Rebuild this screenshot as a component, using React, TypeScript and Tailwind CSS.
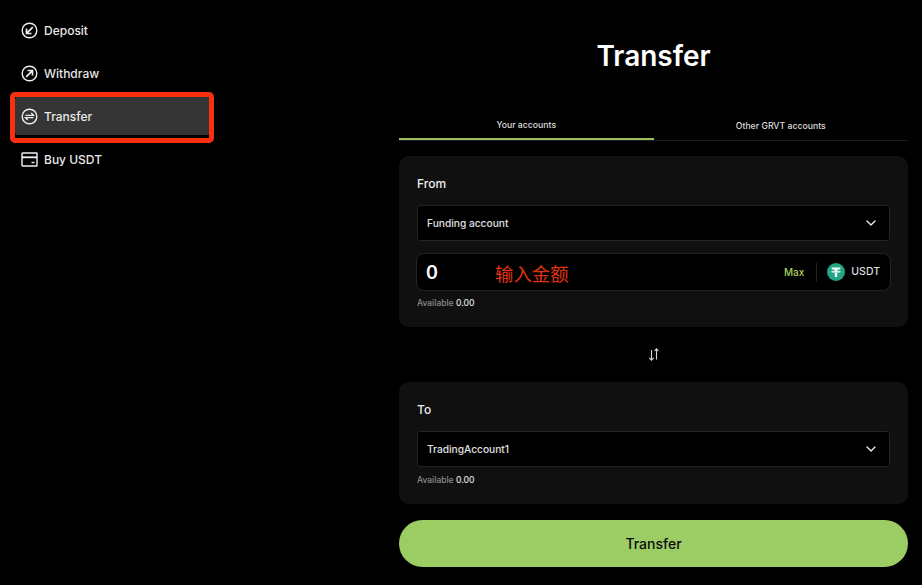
import React from "react";
import { ChevronDown } from "lucide-react";

const font = { fontFamily: "Inter, 'Noto Sans CJK SC', sans-serif" };

function DepositIcon() {
  return (
    <svg width="17" height="17" viewBox="0 0 17 17" fill="none" stroke="currentColor" strokeWidth="1.4">
      <circle cx="8.5" cy="8.5" r="7.3" />
      <path d="M11.800 5.200 5.800 11.200M5.500 6.500v5h5" strokeWidth="1.700" />
    </svg>
  );
}

function WithdrawIcon() {
  return (
    <svg width="17" height="17" viewBox="0 0 17 17" fill="none" stroke="currentColor" strokeWidth="1.4">
      <circle cx="8.5" cy="8.5" r="7.3" />
      <path d="M5.200 11.800 11.200 5.800M6.500 5.500h5v5" strokeWidth="1.700" />
    </svg>
  );
}

function TransferIcon() {
  return (
    <svg width="17" height="17" viewBox="0 0 17 17" fill="none" stroke="currentColor" strokeWidth="1.4">
      <circle cx="8.5" cy="8.5" r="7.3" />
      <path d="M4.500 7.300h8L10.300 5M12.500 9.700h-8L6.700 12" strokeWidth="1.300" />
    </svg>
  );
}

function CardIcon() {
  return (
    <svg width="17" height="15" viewBox="0 0 17 15" fill="none" stroke="currentColor" strokeWidth="1.4">
      <rect x="1" y="1" width="15" height="13" rx="0.6" />
      <path d="M1 5.300h15" strokeWidth="1.800" />
      <path d="M10.500 10.500h3" />
    </svg>
  );
}

function SwapIcon() {
  return (
    <svg width="12" height="13" viewBox="0 0 12 13" fill="none" stroke="currentColor" strokeWidth="1.1" className="text-[#d8d8d8]">
      <path d="M3.500 2v10M1.300 9.800l2.200 2.400 2.200-2.400" />
      <path d="M8.500 11.500V.8M6.500 3 8.500.8 10.500 3" />
    </svg>
  );
}

function TetherLogo() {
  return (
    <svg width="18" height="18" viewBox="0 0 18 18">
      <circle cx="9" cy="9" r="9" fill="#22a584" />
      <path d="M4.700 4.400h8.600v2.200h-3.100v1.200c1.900.1 3.500.4 3.500 1s-1.600.9-3.500 1v4.100H7.800v-4.100c-1.900-.1-3.500-.4-3.500-1s1.600-.9 3.500-1V6.600H4.700z" fill="#fff" />
      <path d="M5.200 8.700c.6.300 2.200.5 3.800.5s3.200-.2 3.800-.5" fill="none" stroke="#22a584" strokeWidth="0.5" />
    </svg>
  );
}

function NavItem({ icon, label, active }: { icon: React.ReactNode; label: string; active?: boolean }) {
  return (
    <div className={`relative flex h-[38px] items-center pl-[6px] ${active ? "rounded-[3px] bg-[#353535]" : ""}`}>
      <span className="flex w-[23px] shrink-0 items-center text-[#f0f0f0]">{icon}</span>
      <span className="pt-[1px] text-[12px] font-medium text-[#e8e8e8]">{label}</span>
      {active ? (
        <div className="absolute -top-[5px] -right-[3px] -bottom-[8px] -left-[5px] rounded-[5px] border-[5px] border-[#f7300f]" />
      ) : null}
    </div>
  );
}

function SelectBox({ label }: { label: string }) {
  return (
    <div className="flex h-[36px] items-center justify-between rounded-[3px] border border-[#242424] bg-black pr-[10px] pl-[9px]">
      <span className="pt-[1px] text-[10.200px] font-medium text-[#e0e0e0]">{label}</span>
      <ChevronDown className="h-[16px] w-[16px] text-[#eeeeee]" />
    </div>
  );
}

function Available() {
  return (
    <p className="text-[8.500px] leading-[11px] font-medium text-[#8a8a8a]">
      Available <span className="text-[#e4e4e4]">0.00</span>
    </p>
  );
}

export default function App() {
  return (
    <div className="flex h-[585px] w-[922px] overflow-hidden bg-black" style={font}>
      <aside className="w-[399px] shrink-0 pt-[11px] pr-[188px] pl-[15px]">
        <div className="flex flex-col gap-[5px]">
          <NavItem icon={<DepositIcon />} label="Deposit" />
          <NavItem icon={<WithdrawIcon />} label="Withdraw" />
          <NavItem icon={<TransferIcon />} label="Transfer" active />
          <NavItem icon={<CardIcon />} label="Buy USDT" />
        </div>
      </aside>

      <main className="w-[509px] shrink-0">
        <h1 className="mt-[34px] h-[44px] text-center text-[28px] leading-[44px] font-semibold text-white">Transfer</h1>

        <div className="mt-[33px] flex h-[30px] border-b border-[#1c1c1c] text-[8.700px] font-medium text-[#dddddd]">
          <div className="flex w-1/2 items-center justify-center border-b-2 border-[#9bbf5e] pt-[3px]">
            <span>Your accounts</span>
          </div>
          <div className="flex w-1/2 items-center justify-center pt-[2px]">Other GRVT accounts</div>
        </div>

        <section className="mt-[15px] h-[171px] rounded-[10px] bg-[#101010] px-[18px] pt-[19px]">
          <p className="text-[12px] leading-[18px] font-medium text-[#eeeeee]">From</p>
          <div className="mt-[12px]">
            <SelectBox label="Funding account" />
          </div>
          <div className="relative mt-[12px] -mx-px flex h-[38px] items-center rounded-[8px] border border-[#242424] bg-black pr-[10px] pl-[9px]">
            <span className="text-[18px] font-semibold text-white">0</span>
            <span className="absolute top-[8px] left-[78px] text-[18.400px] leading-[24px] text-[#e0320f]">输入金额</span>
            <span className="ml-auto text-[10px] font-medium text-[#a9d15f]">Max</span>
            <span className="mr-[10px] ml-[12px] h-[19px] w-px bg-[#242424]" />
            <TetherLogo />
            <span className="ml-[6px] text-[10.500px] font-medium text-[#dddddd]">USDT</span>
          </div>
          <div className="mt-[7px]">
            <Available />
          </div>
        </section>

        <div className="flex h-[55px] items-center justify-center">
          <SwapIcon />
        </div>

        <section className="h-[122px] rounded-[10px] bg-[#101010] px-[18px] pt-[19px]">
          <p className="text-[12px] leading-[18px] font-medium text-[#eeeeee]">To</p>
          <div className="mt-[12px]">
            <SelectBox label="TradingAccount1" />
          </div>
          <div className="mt-[8px]">
            <Available />
          </div>
        </section>

        <button className="mt-[16px] h-[47px] w-full rounded-full bg-[#9ccd65] text-[14px] font-medium text-[#0c0c0c]">
          Transfer
        </button>
      </main>
    </div>
  );
}
